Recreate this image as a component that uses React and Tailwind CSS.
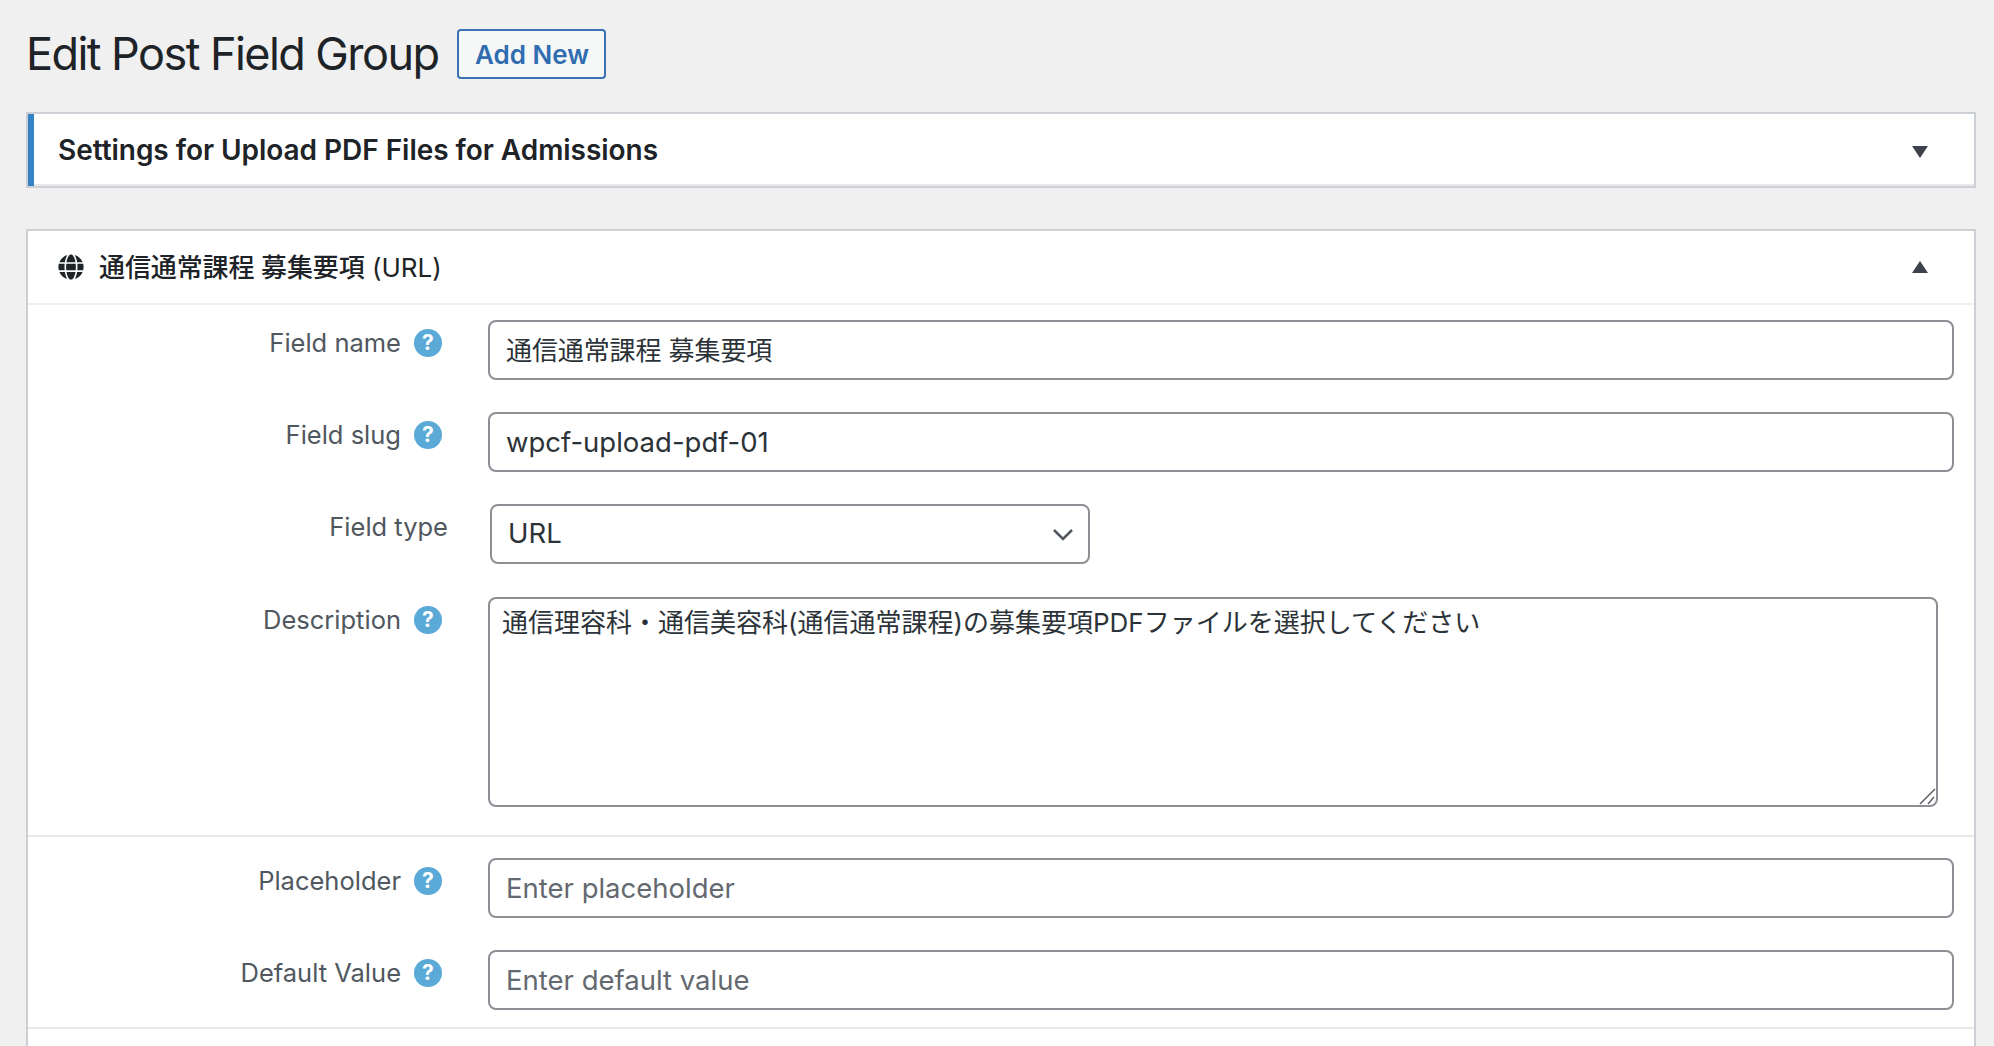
import React from 'react'
import { FaGlobe } from 'react-icons/fa'

const font = "font-['Inter','Noto_Sans_CJK_JP',sans-serif]"
const fieldClass =
  "w-full h-[60px] px-[16px] bg-white border-2 border-[#8c8f94] rounded-[8px] text-[27.5px] text-[#2c3338] outline-none placeholder:text-[#646970]"

function HelpIcon() {
  return (
    <span className="w-[28px] h-[28px] rounded-full bg-[#5aa9d6] text-white text-[21px] font-bold flex items-center justify-center shrink-0">
      ?
    </span>
  )
}

function Row({ label, help = true, children, className = 'mb-[32px]' }) {
  return (
    <div className={`flex items-start ${className}`}>
      <div className={`w-[460px] shrink-0 h-[46px] flex items-center justify-end gap-[13px] text-[25.5px] text-[#50575e] ${help ? 'pr-[46px]' : 'pr-[40px]'}`}>
        <span>{label}</span>
        {help && <HelpIcon />}
      </div>
      <div className="flex-1 min-w-0">{children}</div>
    </div>
  )
}

export default function App() {
  return (
    <div className={`h-[1046px] overflow-hidden bg-[#f0f0f1] pl-[26px] pr-[18px] ${font}`}>
      <div className="h-[112px] flex items-start pt-[29px]">
        <h1 className="text-[45px] leading-[50px] text-[#1d2327] font-normal tracking-[-1.56px]">Edit Post Field Group</h1>
        <a href="#" className="ml-[19px] w-[149px] h-[50px] flex items-center justify-center border-2 border-[#3a72b5] rounded-[4px] bg-[#f6f7f7] text-[#2f6db0] text-[26px] font-semibold">
          Add New
        </a>
      </div>

      <div className="h-[76px] border-2 border-[#ccd0d4] bg-white flex">
        <div className="w-[6px] bg-[#3582c4] shrink-0" />
        <div className="flex-1 flex flex-col">
          <div className="flex-1 flex items-center justify-between pl-[24px] pr-[46px]">
            <h2 className="pt-[2px] text-[28px] font-semibold text-[#1d2327] tracking-[-0.04px]">Settings for Upload PDF Files for Admissions</h2>
            <svg className="mt-[6px]" width="16" height="12" viewBox="0 0 16 12"><polygon points="0,0 16,0 8,12" fill="#3c434a" /></svg>
          </div>
          <div className="h-[2px] bg-[#e8e9ea]" />
        </div>
      </div>

      <div className="mt-[41px] border-2 border-b-0 border-[#ccd0d4] bg-white h-[900px]">
        <div className="h-[74px] border-b-2 border-[#f0f0f1] flex items-center justify-between pl-[30px] pr-[46px]">
          <div className="flex items-center gap-[15px] text-[26px] text-[#1d2327]">
            <FaGlobe className="w-[26px] h-[26px]" />
            <span><span className="font-medium tracking-[-0.12px]">通信通常課程 募集要項</span> (URL)</span>
          </div>
          <svg width="16" height="12" viewBox="0 0 16 12"><polygon points="8,0 16,12 0,12" fill="#3c434a" /></svg>
        </div>

        <div className="pt-[15px] pr-[20px]">
          <Row label="Field name">
            <input className={`${fieldClass} text-[26px]! pb-[4px] tracking-[-0.1px]`} defaultValue="通信通常課程 募集要項" />
          </Row>
          <Row label="Field slug">
            <input className={fieldClass} defaultValue="wpcf-upload-pdf-01" />
          </Row>
          <Row label="Field type" help={false} className="mb-[33px]">
            <div className="relative ml-[2px] w-[600px]">
              <select className={`${fieldClass} appearance-none`} defaultValue="URL">
                <option>URL</option>
              </select>
              <svg className="absolute right-[16px] top-[24px] pointer-events-none" width="22" height="14" viewBox="0 0 22 14" fill="none">
                <path d="M2 2 L11 11 L20 2" stroke="#50575e" strokeWidth="2.5" />
              </svg>
            </div>
          </Row>
          <Row label="Description" className="mb-[28px]">
            <div className="relative w-[1450px]">
              <textarea
                className="block w-full h-[210px] px-[12px] py-[6px] bg-white border-2 border-[#8c8f94] rounded-[8px] text-[26px] leading-[36px] text-[#2c3338] outline-none resize-none"
                defaultValue="通信理容科・通信美容科(通信通常課程)の募集要項PDFファイルを選択してください"
              />
              {/* resize grip */}
              <svg className="absolute right-[1px] bottom-[2px] pointer-events-none" width="18" height="18" viewBox="0 0 18 18" fill="none">
                <path d="M1 17 L16 2 M9 17 L15 10" stroke="#5f6164" strokeWidth="1.5" />
              </svg>
            </div>
          </Row>
        </div>

        <div className="h-[2px] bg-[#e8e8e9]" />

        <div className="pt-[21px] pr-[20px]">
          <Row label="Placeholder">
            <input className={fieldClass} placeholder="Enter placeholder" />
          </Row>
          <Row label="Default Value" className="mb-[17px]">
            <input className={fieldClass} placeholder="Enter default value" />
          </Row>
        </div>

        <div className="h-[2px] bg-[#e8e8e9]" />
      </div>
    </div>
  )
}
